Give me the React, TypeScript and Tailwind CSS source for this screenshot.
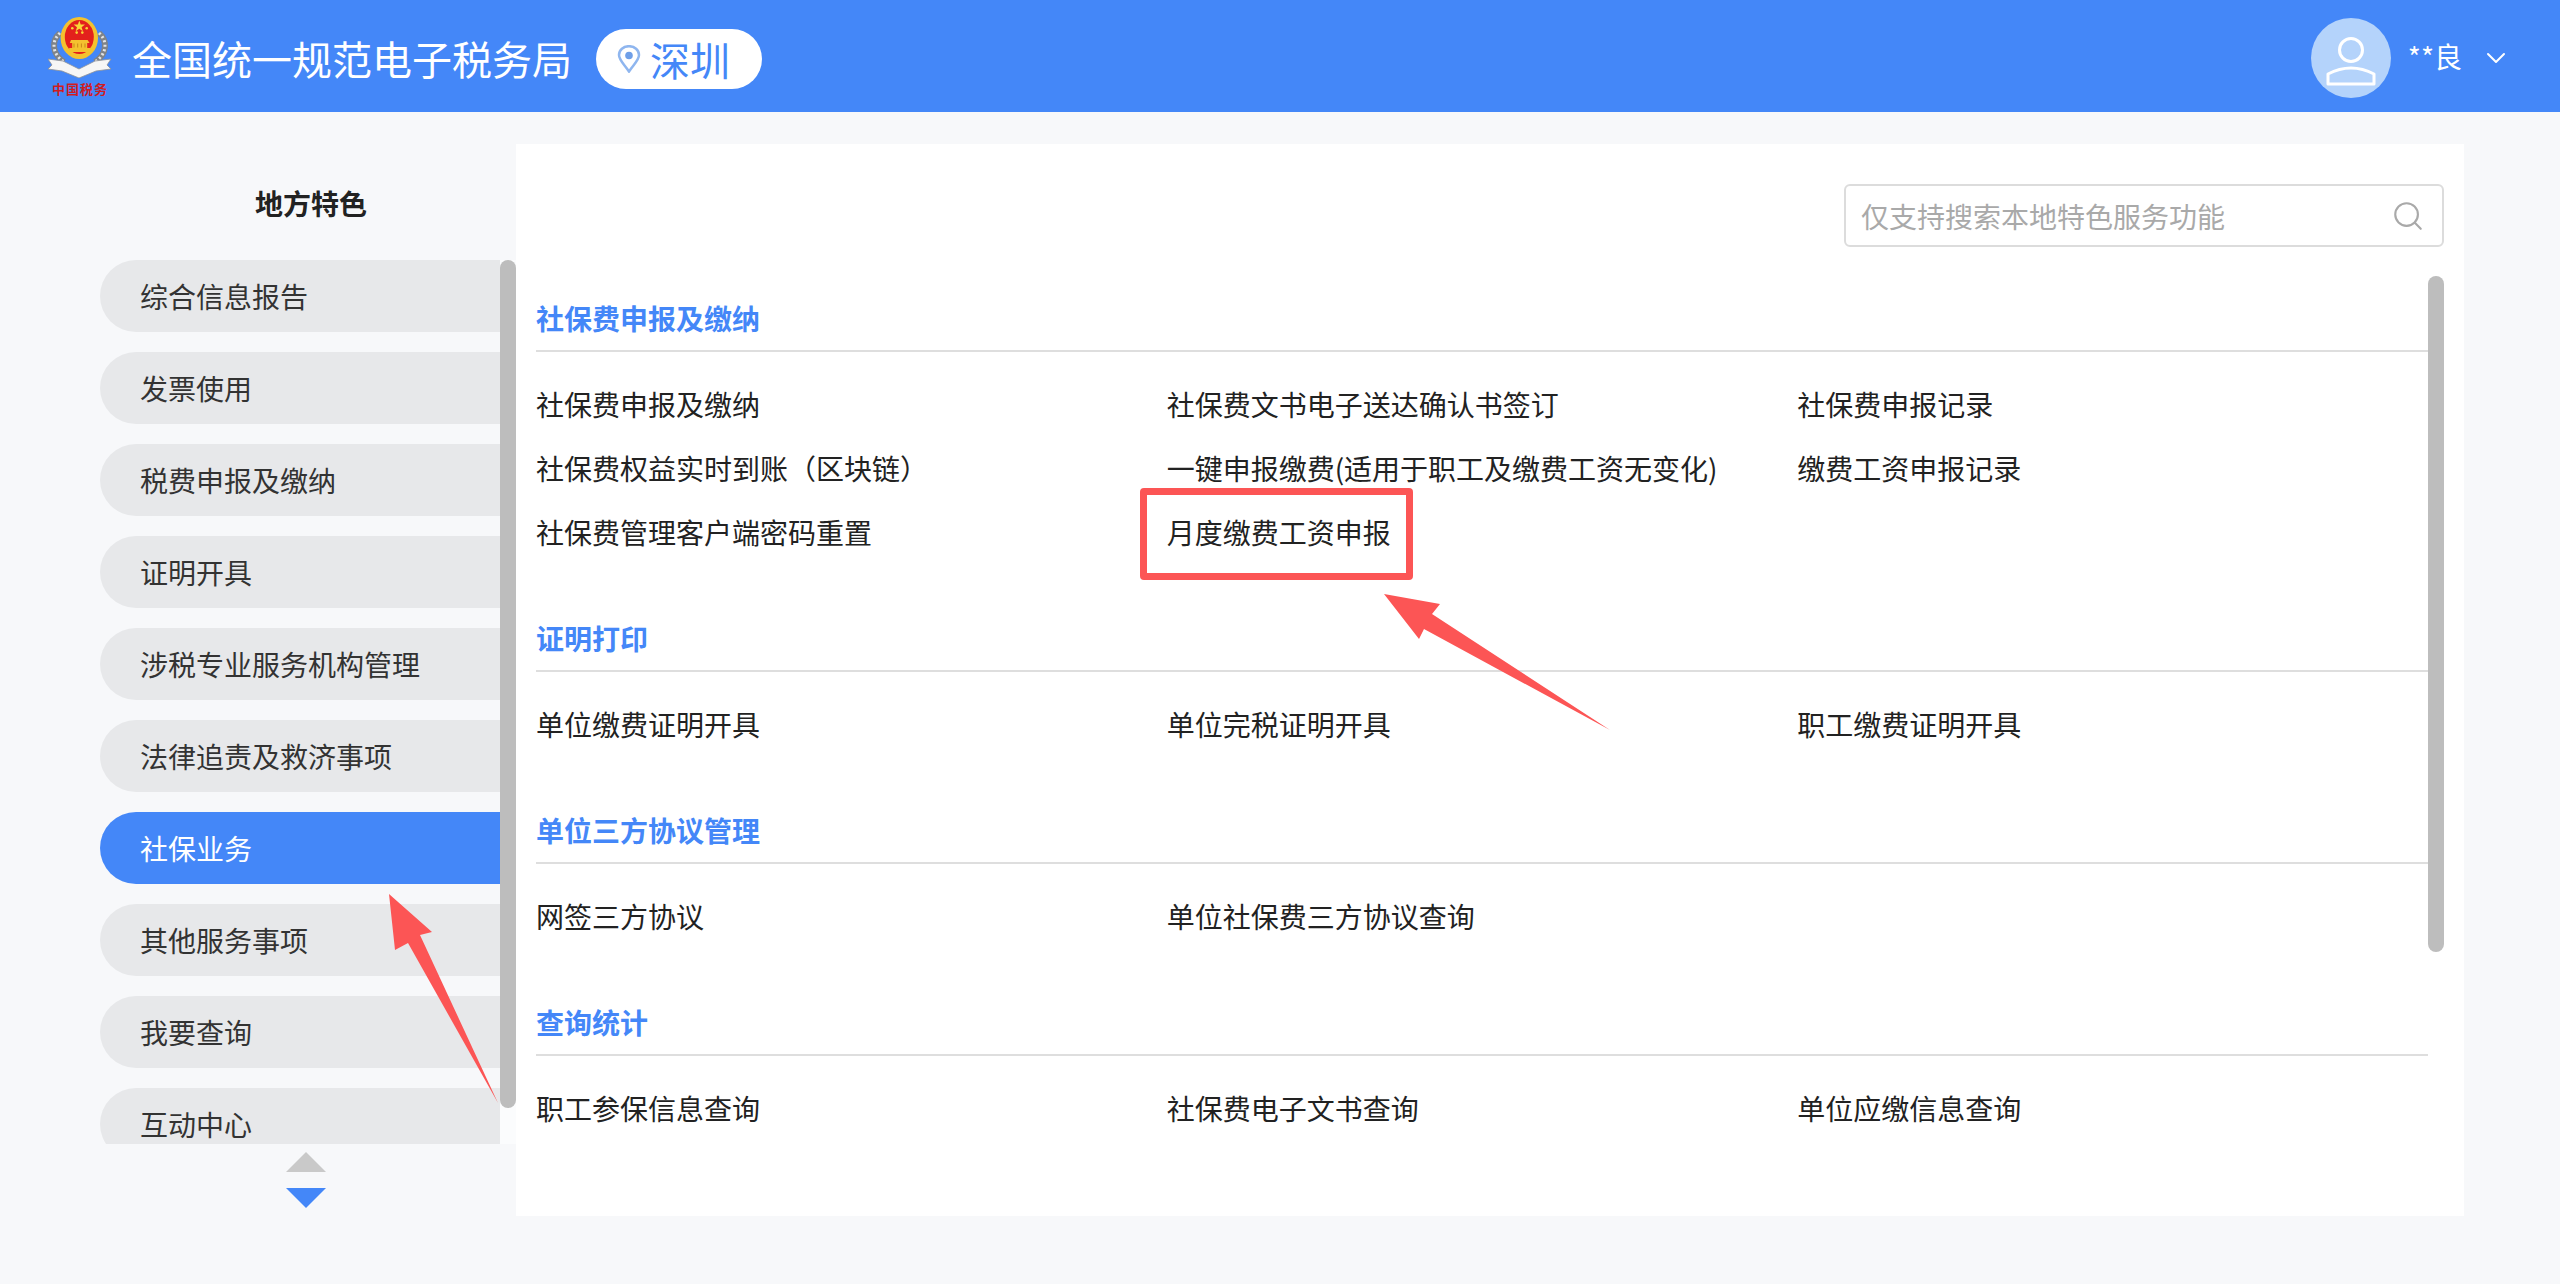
import React from 'react';
import { ChevronDown, Search } from 'lucide-react';

const menu = [
  '综合信息报告',
  '发票使用',
  '税费申报及缴纳',
  '证明开具',
  '涉税专业服务机构管理',
  '法律追责及救济事项',
  '社保业务',
  '其他服务事项',
  '我要查询',
  '互动中心',
];

const sections = [
  {
    title: '社保费申报及缴纳',
    links: [
      '社保费申报及缴纳',
      '社保费文书电子送达确认书签订',
      '社保费申报记录',
      '社保费权益实时到账（区块链）',
      '一键申报缴费(适用于职工及缴费工资无变化)',
      '缴费工资申报记录',
      '社保费管理客户端密码重置',
      '月度缴费工资申报',
    ],
  },
  { title: '证明打印', links: ['单位缴费证明开具', '单位完税证明开具', '职工缴费证明开具'] },
  { title: '单位三方协议管理', links: ['网签三方协议', '单位社保费三方协议查询'] },
  {
    title: '查询统计',
    links: [
      '职工参保信息查询',
      '社保费电子文书查询',
      '单位应缴信息查询',
      '单位缴费明细查询',
      '社保费缴费凭证信息查询',
      '职工缴费明细查询',
    ],
  },
];

const smallStars = [
  [24.3, 12.3],
  [38.7, 12.3],
  [28.7, 16.6],
  [34.3, 16.6],
];

function Emblem() {
  return (
    <svg width="64" height="62" viewBox="0 0 64 62" className="block">
      <path d="M12 17 C3 25 4 38 16 46" fill="none" stroke="#7f8388" strokeWidth="6" />
      <path d="M12 17 C3 25 4 38 16 46" fill="none" stroke="#e4e5e7" strokeWidth="3" strokeDasharray="2 2.5" />
      <path d="M51 17 C60 25 59 38 47 46" fill="none" stroke="#7f8388" strokeWidth="6" />
      <path d="M51 17 C60 25 59 38 47 46" fill="none" stroke="#e4e5e7" strokeWidth="3" strokeDasharray="2 2.5" />
      <ellipse cx="31.3" cy="22" rx="18.7" ry="21" fill="#f4c22f" />
      <ellipse cx="31.3" cy="21" rx="14.5" ry="17" fill="#e3211c" />
      <path d="M31.3 4.6 l1.4 4 h4.3 l-3.4 2.6 1.3 4.1 -3.6 -2.5 -3.6 2.5 1.3 -4.1 -3.4 -2.6 h4.3z" fill="#f8d637" />
      {smallStars.map(([x, y]) => (
        <circle key={`${x}-${y}`} cx={x} cy={y} r="1.3" fill="#f8d637" />
      ))}
      <path d="M23 24 h16.6 l2 3 h-2.4 v5 h3 v4 h-21 v-4 h3 v-5 h-2.4 z" fill="#f4c22f" />
      <path d="M26 27.5 v4 M29.7 27.5 v4 M33.4 27.5 v4 M37 27.5 v4" stroke="#c9871b" strokeWidth="1" />
      <path
        d="M0 43 L15 45 L31 53 L47 45 L63 43 L59 49 L63 53 L48 55 L31 62 L14 55 L0 53 L4 49 Z"
        fill="#f6f6f6"
        stroke="#8f9296"
        strokeWidth="0.8"
      />
    </svg>
  );
}

function PinIcon() {
  return (
    <svg width="24" height="28" viewBox="0 0 24 28" fill="none" className="block">
      <path d="M12 26.5 C7 19 2 15 2 10 A10 8.8 0 0 1 22 10 C22 15 17 19 12 26.5Z" stroke="#8fb6ef" strokeWidth="2.5" />
      <circle cx="12" cy="10.5" r="3.8" fill="#6f9fe8" />
    </svg>
  );
}

function UserIcon() {
  return (
    <svg width="80" height="80" viewBox="0 0 80 80" fill="none" className="block">
      <circle cx="40" cy="32" r="11.5" stroke="#fff" strokeWidth="3" />
      <path d="M17 66 V56 Q40 44 63 56 V66 Z" stroke="#fff" strokeWidth="3" strokeLinejoin="round" />
    </svg>
  );
}

export default function App() {
  return (
    <div className="relative h-[1284px] overflow-hidden bg-[#f7f8fa] font-['Noto_Sans_CJK_SC',sans-serif] text-[28px] text-[#333]">
      <header className="flex h-[112px] items-center bg-[#4487f8] pl-[48px] pr-[48px] text-white">
        <div className="flex w-[64px] flex-col items-center self-start pt-[16px]">
          <Emblem />
          <span className="mt-[2px] whitespace-nowrap font-['Liberation_Serif','Noto_Sans_CJK_SC',serif] text-[13px] font-bold leading-[20px] tracking-[1px] text-[#d01c1f]">
            中国税务
          </span>
        </div>
        <h1 className="ml-[20px] mt-[4px] whitespace-nowrap text-[40px] font-normal leading-[60px]">全国统一规范电子税务局</h1>
        <div className="ml-[24px] mt-[6px] flex h-[60px] w-[166px] items-center rounded-full bg-white pl-[21px] text-[#4487f8]">
          <PinIcon />
          <span className="ml-[9px] text-[40px] leading-[60px]">深圳</span>
        </div>
        <div className="ml-auto mt-[4px] h-[80px] w-[80px] rounded-full bg-[#b4d3fb]">
          <UserIcon />
        </div>
        <span className="ml-[17px] leading-[40px]">**良</span>
        <ChevronDown className="ml-[18px] mt-[4px] h-[32px] w-[32px]" strokeWidth={1.5} />
      </header>

      <div className="flex pl-[100px] pt-[32px]">
        <aside className="w-[416px] flex-none">
          <div className="pb-[37px] pl-[6px] pt-[39px] text-center font-bold leading-[40px] text-[#222]">地方特色</div>
          <div className="relative h-[884px] overflow-hidden">
            <ul className="flex w-[400px] flex-col gap-[20px]">
              {menu.map((item) => (
                <li
                  key={item}
                  className={`flex h-[72px] flex-none items-center rounded-l-full pl-[40px] ${
                    item === '社保业务' ? 'bg-[#4487f8] text-white' : 'bg-[#e7e8ea]'
                  }`}
                >
                  {item}
                </li>
              ))}
            </ul>
            <div className="absolute bottom-0 left-[400px] top-0 w-[16px] bg-[#fbfcfd]" />
            <div className="absolute left-[400px] top-0 h-[848px] w-[16px] rounded-full bg-[#bdbdbd]" />
          </div>
          <div className="flex w-[412px] flex-col items-center gap-[16px] pt-[8px]">
            <svg width="40" height="20" viewBox="0 0 40 20" className="block">
              <path d="M20 0 L40 20 H0 Z" fill="#c9c9c9" />
            </svg>
            <svg width="40" height="20" viewBox="0 0 40 20" className="block">
              <path d="M0 0 H40 L20 20 Z" fill="#4487f8" />
            </svg>
          </div>
        </aside>

        <main className="flex h-[1072px] w-[1948px] flex-none flex-col bg-white px-[20px] pt-[40px]">
          <div className="flex justify-end">
            <div className="flex h-[63px] w-[600px] items-center justify-between rounded-[6px] border-2 border-[#dcdcdc] pl-[15px] pr-[17px]">
              <span className="text-[#a9a9a9]">仅支持搜索本地特色服务功能</span>
              <Search className="h-[34px] w-[34px] text-[#a9a9a9]" strokeWidth={1.5} />
            </div>
          </div>
          <div className="relative h-[912px] overflow-hidden pr-[16px]">
            <div className="pt-[51px]">
              {sections.map((section) => (
                <section key={section.title} className="mb-[54px]">
                  <h2 className="border-b-2 border-[#dedede] pb-[12px] font-bold leading-[40px] text-[#4487f8]">
                    {section.title}
                  </h2>
                  <div className="grid grid-cols-3 pt-[20px]">
                    {section.links.map((link) => (
                      <div key={link} className="whitespace-nowrap leading-[64px] text-[#222]">
                        {link}
                      </div>
                    ))}
                  </div>
                </section>
              ))}
            </div>
            <div className="absolute right-0 top-[29px] h-[676px] w-[16px] rounded-full bg-[#bdbdbd]" />
          </div>
        </main>
      </div>

      {/* annotations drawn on top of the page */}
      <div className="absolute left-[1140px] top-[488px] h-[92px] w-[273px] rounded-[4px] border-[7px] border-[#fc5555]" />
      <svg className="absolute left-[1380px] top-[590px]" width="234" height="144" viewBox="1380 590 234 144">
        <path d="M1384 594 L1440 604 L1432 614 L1610 730 L1424 629 L1419 639 Z" fill="#fc5555" />
      </svg>
      <svg className="absolute left-[385px] top-[890px]" width="118" height="218" viewBox="385 890 118 218">
        <path d="M389 894 L432 932 L420 935 L498 1103 L408 943 L395 950 Z" fill="#fc5555" />
      </svg>
    </div>
  );
}
